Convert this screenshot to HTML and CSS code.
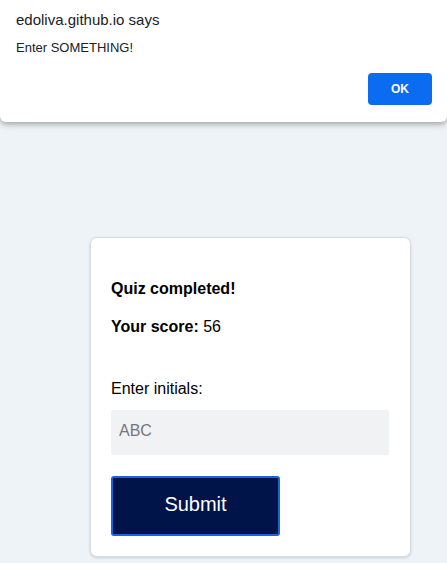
FILE: index.html
```html
<!DOCTYPE html>
<html>
<head>
<meta charset="utf-8">
<link rel="stylesheet" href="styles.css">
</head>
<body>
<main class="page">
  <section class="card">
    <h2 class="title">Quiz completed!</h2>
    <p class="score"><strong>Your score:</strong> 56</p>
    <label class="label" for="initials">Enter initials:</label>
    <input id="initials" class="input" type="text" placeholder="ABC">
    <button class="submit">Submit</button>
  </section>
</main>
<div class="dialog">
  <div class="dialog-title">edoliva.github.io says</div>
  <div class="dialog-msg">Enter SOMETHING!</div>
  <div class="dialog-actions"><button class="ok">OK</button></div>
</div>
</body>
</html>
```
FILE: styles.css
```css
html, body {
  margin: 0;
  padding: 0;
  height: 100%;
}
body {
  background: #edf3f7;
  font-family: "Liberation Sans", Arial, sans-serif;
  overflow: hidden;
}
.page {
  padding-top: 237px;
  padding-left: 90px;
}
.card {
  box-sizing: border-box;
  width: 321px;
  height: 320px;
  background: #fff;
  border: 1px solid #d9dde0;
  border-radius: 7px;
  box-shadow: 0 1px 3px rgba(0,0,0,0.15);
  padding: 42px 20px 0 20px;
  display: flex;
  flex-direction: column;
  align-items: flex-start;
}
.title {
  margin: 0;
  font-size: 16px;
  font-weight: bold;
  line-height: 18px;
  color: #000;
}
.score {
  margin: 20px 0 0 0;
  font-size: 16px;
  line-height: 18px;
  color: #000;
}
.label {
  margin-top: 44px;
  font-size: 16px;
  line-height: 18px;
  color: #000;
}
.input {
  box-sizing: border-box;
  margin-top: 12px;
  width: 278px;
  height: 45px;
  border: none;
  border-radius: 2px;
  background: #f1f2f3;
  padding: 0 8px 3px 8px;
  font-family: "Liberation Sans", Arial, sans-serif;
  font-size: 16px;
  outline: none;
}
.input::placeholder {
  color: #777;
}
.submit {
  box-sizing: border-box;
  margin-top: 21px;
  width: 169px;
  height: 60px;
  background: #00144a;
  border: 2px solid #1a63d8;
  border-radius: 3px;
  color: #fff;
  font-family: "Liberation Sans", Arial, sans-serif;
  font-size: 20px;
  padding: 0 0 3px 0;
}
.dialog {
  position: absolute;
  top: 0;
  left: 0;
  width: 447px;
  height: 122px;
  box-sizing: border-box;
  background: #fff;
  box-shadow: 0 2px 6px rgba(0,0,0,0.35);
  border-bottom-left-radius: 6px;
  border-bottom-right-radius: 6px;
  padding: 11px 15px 0 16px;
}
.dialog-title {
  font-size: 15px;
  line-height: 18px;
  color: #202124;
}
.dialog-msg {
  margin-top: 11px;
  font-size: 13px;
  line-height: 15px;
  color: #202124;
}
.dialog-actions {
  display: flex;
  justify-content: flex-end;
  margin-top: 18px;
}
.ok {
  width: 64px;
  height: 32px;
  border: none;
  border-radius: 4px;
  background: #0b6cf2;
  color: #fff;
  font-family: "Liberation Sans", Arial, sans-serif;
  font-weight: bold;
  font-size: 12px;
  padding: 0;
}
```
